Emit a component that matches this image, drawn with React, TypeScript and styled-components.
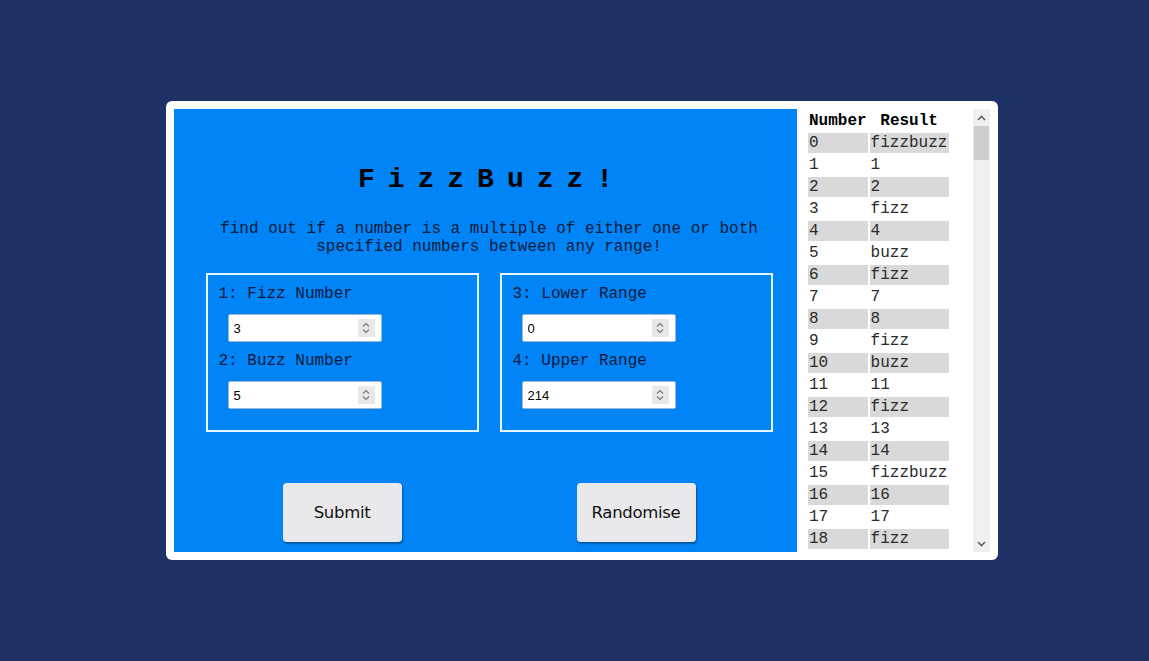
import React from "react";
import styled, { createGlobalStyle } from "styled-components";

const rows = Array.from({ length: 215 }, (_, n) => {
  let result = String(n);
  if (n % 15 === 0) result = "fizzbuzz";
  else if (n % 3 === 0) result = "fizz";
  else if (n % 5 === 0) result = "buzz";
  return { n, result };
});

function Spinner() {
  return (
    <SpinBox>
      <svg width="10" height="14" viewBox="0 0 10 14" fill="none" stroke="#7a7a7a" strokeWidth="1.2">
        <path d="M2 5.5 L5 2.5 L8 5.5" />
        <path d="M2 8.5 L5 11.5 L8 8.5" />
      </svg>
    </SpinBox>
  );
}

function NumberField({ label, value }: { label: string; value: string }) {
  return (
    <>
      <FieldLabel>{label}</FieldLabel>
      <InputBox>
        <Input type="text" defaultValue={value} />
        <Spinner />
      </InputBox>
    </>
  );
}

function App() {
  return (
    <>
      <GlobalStyle />
      <Page>
        <Card>
          <MainPanel>
            <Title>FizzBuzz!</Title>
            <Subtitle>
              find out if a number is a multiple of either one or both
              <br />
              specified numbers between any range!
            </Subtitle>
            <Grid>
              <FieldBox>
                <NumberField label="1: Fizz Number" value="3" />
                <NumberField label="2: Buzz Number" value="5" />
              </FieldBox>
              <FieldBox>
                <NumberField label="3: Lower Range" value="0" />
                <NumberField label="4: Upper Range" value="214" />
              </FieldBox>
              <Button>Submit</Button>
              <Button>Randomise</Button>
            </Grid>
          </MainPanel>

          <ResultPanel>
            <TableArea>
              <Table>
                <thead>
                  <tr>
                    <Th>Number</Th>
                    <Th>Result</Th>
                  </tr>
                </thead>
                <tbody>
                  {rows.map((r) => (
                    <tr key={r.n}>
                      <Td $shade={r.n % 2 === 0} $w={59}>{r.n}</Td>
                      <Td $shade={r.n % 2 === 0} $w={79}>{r.result}</Td>
                    </tr>
                  ))}
                </tbody>
              </Table>
            </TableArea>
            <ScrollBar>
              <ScrollButton>
                <svg width="9" height="6" viewBox="0 0 9 6" fill="none" stroke="#606060" strokeWidth="1.6">
                  <path d="M1 5 L4.5 1.5 L8 5" />
                </svg>
              </ScrollButton>
              <ScrollTrack>
                <Thumb />
              </ScrollTrack>
              <ScrollButton>
                <svg width="9" height="6" viewBox="0 0 9 6" fill="none" stroke="#606060" strokeWidth="1.6">
                  <path d="M1 1 L4.5 4.5 L8 1" />
                </svg>
              </ScrollButton>
            </ScrollBar>
          </ResultPanel>
        </Card>
      </Page>
    </>
  );
}

//@ styled ////////////////////////////////////////
const GlobalStyle = createGlobalStyle`
  html, body {
    margin: 0;
    padding: 0;
    background: #1e3166;
  }
  * {
    box-sizing: border-box;
  }
`;

const Page = styled.div`
  width: 100%;
  height: 100vh;
  display: flex;
  align-items: center;
  justify-content: center;
  padding-left: 15px;
`;

const Card = styled.div`
  width: 832px;
  height: 459px;
  background: #ffffff;
  border-radius: 6px;
  padding: 8px;
  display: flex;
`;

const MainPanel = styled.div`
  width: 623px;
  background: #0084f6;
  padding: 55px 25px 10px 32px;
  display: flex;
  flex-direction: column;
  align-items: center;
`;

const Title = styled.h1`
  margin: 0;
  padding-left: 6px;
  font-family: "Liberation Mono", "Courier New", monospace;
  font-size: 28px;
  line-height: 32px;
  font-weight: bold;
  letter-spacing: 13px;
  color: #000;
`;

const Subtitle = styled.p`
  margin: 24px 0 0;
  font-family: "Liberation Mono", "Courier New", monospace;
  font-size: 16px;
  line-height: 18px;
  text-align: center;
  color: #0a1a3a;
`;

const Grid = styled.div`
  margin-top: 17px;
  display: grid;
  grid-template-columns: 273px 273px;
  column-gap: 21px;
  row-gap: 51px;
  justify-items: center;
`;

const FieldBox = styled.div`
  width: 273px;
  height: 159px;
  border: 2px solid #e6f6ff;
  padding: 10px 11px 0;
  display: flex;
  flex-direction: column;
  align-items: flex-start;
`;

const FieldLabel = styled.label`
  font-family: "Liberation Mono", "Courier New", monospace;
  font-size: 16px;
  line-height: 18px;
  color: #0b1a3c;
  margin-bottom: 11px;
`;

const InputBox = styled.div`
  width: 154px;
  height: 28px;
  margin-left: 9px;
  margin-bottom: 10px;
  background: #fff;
  border: 1px solid #9fb6d6;
  border-radius: 2px;
  display: flex;
  align-items: center;
  padding: 0 6px 0 5px;
`;

const Input = styled.input`
  flex: 1;
  min-width: 0;
  border: none;
  outline: none;
  padding: 0;
  background: transparent;
  font-family: "Liberation Sans", Arial, sans-serif;
  font-size: 13px;
  color: #000;
`;

const SpinBox = styled.span`
  width: 17px;
  height: 18px;
  background: #e8e8ea;
  display: flex;
  align-items: center;
  justify-content: center;
`;

const Button = styled.button`
  width: 119px;
  height: 59px;
  background: #e9e9ed;
  border: none;
  border-radius: 4px;
  box-shadow: 1px 2px 2px rgba(0, 0, 0, 0.35);
  font-family: "DejaVu Sans", Verdana, sans-serif;
  font-size: 16.5px;
  color: #111;
  letter-spacing: -0.3px;
`;

const ResultPanel = styled.div`
  flex: 1;
  display: flex;
  overflow: hidden;
`;

const TableArea = styled.div`
  flex: 1;
  overflow: hidden;
  padding-left: 9px;
`;

const Table = styled.table`
  border-spacing: 2px;
  font-family: "Liberation Mono", "Courier New", monospace;
  font-size: 16px;
`;

const Th = styled.th`
  font-weight: bold;
  height: 20px;
  padding: 0 1px;
  color: #000;
`;

const Td = styled.td<{ $shade: boolean; $w: number }>`
  width: ${({ $w }) => $w}px;
  height: 20px;
  padding: 0 1px;
  line-height: 20px;
  color: #2a2a2a;
  background: ${({ $shade }) => ($shade ? "#d9d9d9" : "transparent")};
`;

const ScrollBar = styled.div`
  width: 17px;
  background: #f0f0f0;
  display: flex;
  flex-direction: column;
`;

const ScrollButton = styled.div`
  height: 17px;
  display: flex;
  align-items: center;
  justify-content: center;
`;

const ScrollTrack = styled.div`
  flex: 1;
  padding: 0 1px;
`;

const Thumb = styled.div`
  height: 34px;
  background: #cdcdcd;
`;

export default App;
